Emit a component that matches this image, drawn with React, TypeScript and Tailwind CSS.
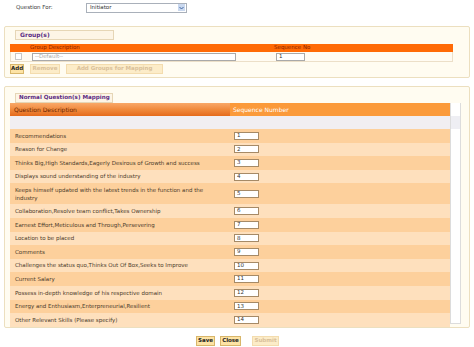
import React from 'react';

const questions: { text: string; tall?: boolean }[] = [
  { text: 'Recommendations' },
  { text: 'Reason for Change' },
  { text: 'Thinks Big,High Standards,Eagerly Desirous of Growth and success' },
  { text: 'Displays sound understanding of the industry' },
  { text: 'Keeps himself updated with the latest trends in the function and the industry', tall: true },
  { text: 'Collaboration,Resolve team conflict,Takes Ownership' },
  { text: 'Earnest Effort,Meticulous and Through,Persevering' },
  { text: 'Location to be placed' },
  { text: 'Comments' },
  { text: 'Challenges the status quo,Thinks Out Of Box,Seeks to Improve' },
  { text: 'Current Salary' },
  { text: 'Possess in-depth knowledge of his respective domain' },
  { text: 'Energy and Enthusiasm,Enterpreneurial,Resilient' },
  { text: 'Other Relevant Skills (Please specify)' },
];

function Btn({ label, w, disabled }: { label: string; w: string; disabled?: boolean }) {
  return (
    <div
      className={`flex h-[10px] items-center justify-center whitespace-nowrap border text-[5.5px] font-bold ${w} ${
        disabled ? 'border-[#f3dcae] bg-[#fcecc8] text-[#d9c09a]' : 'border-[#d8b66a] bg-[#fde3a4] text-[#222]'
      }`}
    >
      {label}
    </div>
  );
}

export default function App() {
  return (
    <div className="h-[347px] w-[474px] overflow-hidden bg-white font-['DejaVu_Sans',Verdana,sans-serif] text-[5.5px] leading-none text-[#333]">
      {/* question for */}
      <div className="flex h-[14px] items-center pt-[1px]">
        <div className="ml-[16px] w-[70px] text-[#333]">Question For:</div>
        <div className="flex h-[10px] w-[101px] items-center border border-[#a9b0ba] bg-white">
          <span className="pl-[3px]">Initiator</span>
          <div className="ml-auto mr-[1px] flex h-[7px] w-[7px] items-center justify-center bg-[#c9d8ef]">
            <svg width="5" height="4" viewBox="0 0 5 4">
              <path d="M0.5 1 L2.5 3 L4.5 1" fill="none" stroke="#3f64a0" strokeWidth="1" />
            </svg>
          </div>
        </div>
      </div>

      {/* groups */}
      <div className="ml-[4px] mt-[12px] h-[52px] w-[466px] rounded-[2px] border border-[#ecdfbf] bg-[#fffcf1] pl-[5px] pt-[3px]">
        <div className="ml-[5px] flex h-[10px] w-[99px] items-center border border-[#e6d6b6] bg-[#fdf5e6] pl-[4px] text-[6px] font-bold text-[#5b2c83]">
          Group(s)
        </div>
        <div className="mt-[4px] w-[443px]">
          <div className="grid h-[8px] grid-cols-[18px_244px_1fr] items-center bg-[#ff6a06] text-[#8a1f00]">
            <div />
            <div className="pl-[2px]">Group Description</div>
            <div className="pl-[2px]">Sequence No</div>
          </div>
          <div className="grid h-[10px] grid-cols-[18px_244px_1fr] items-center border-x border-b border-[#ecdfc8] bg-[#fffbf2]">
            <div className="ml-[4px] h-[7px] w-[7px] border border-[#c7c7c7] bg-white" />
            <div className="ml-[3px] flex h-[8px] w-[204px] items-center border border-[#a9a9a9] bg-white pl-[2px] text-[#aaa]">
              --Default--
            </div>
            <div className="ml-[3px] flex h-[8px] w-[29px] items-center border border-[#a9a9a9] bg-white pl-[2px] text-[#333]">
              1
            </div>
          </div>
        </div>
        <div className="mt-[2px] flex gap-[6px]">
          <Btn label="Add" w="w-[14px]" />
          <Btn label="Remove" w="w-[30px]" disabled />
          <Btn label="Add Groups for Mapping" w="w-[97px]" disabled />
        </div>
      </div>

      {/* questions */}
      <div className="ml-[4px] mt-[8px] h-[242px] w-[466px] rounded-[2px] border border-[#ecdfbf] bg-[#fffcf1] pl-[5px] pt-[6px]">
        <div className="ml-[5px] flex h-[10px] w-[98px] items-center whitespace-nowrap border border-[#e6d6b6] bg-[#fdf5e6] pl-[3px] text-[5.6px] font-bold text-[#5b2c83]">
          Normal Question(s) Mapping
        </div>
        <div className="flex">
          <div className="w-[440px]">
            <div className="grid h-[13px] grid-cols-[220px_1fr] items-center">
              <div className="flex h-full items-center bg-gradient-to-b from-[#f9a868] via-[#f08a3c] to-[#e56a1a] pl-[4px] text-[6px] text-[#6a2400]">
                Question Description
              </div>
              <div className="flex h-full items-center bg-[#fb9a3a] pl-[3px] text-[6px] text-white">Sequence Number</div>
            </div>
            <div className="h-[13px] bg-[#f1eef1]" />
            {questions.map((q, i) => (
              <div
                key={i}
                className={`grid grid-cols-[220px_1fr] items-center ${q.tall ? 'h-[21px]' : 'h-[13.6px]'} ${
                  i % 2 === 0 ? 'bg-[#fdd09c]' : 'bg-[#fee0bd]'
                }`}
              >
                <div className="pl-[5px] pr-[10px] leading-[1.5] text-[#4a3a2a]">{q.text}</div>
                <div className="ml-[4px] flex h-[8px] w-[25px] items-center border border-[#a68a66] bg-white pl-[2px] text-[#333]">
                  {i + 1}
                </div>
              </div>
            ))}
          </div>
          <div className="h-[221px] w-[11px] border-x border-b border-[#dcdcdc] bg-white">
            <div className="mt-[13px] h-[13px] bg-[#eeeef3]" />
          </div>
        </div>
      </div>

      {/* footer */}
      <div className="mt-[8px] flex gap-[5px] pl-[196px]">
        <Btn label="Save" w="w-[19px]" />
        <Btn label="Close" w="w-[21px]" />
        <div className="w-[1px]" />
        <Btn label="Submit" w="w-[27px]" disabled />
      </div>
    </div>
  );
}
